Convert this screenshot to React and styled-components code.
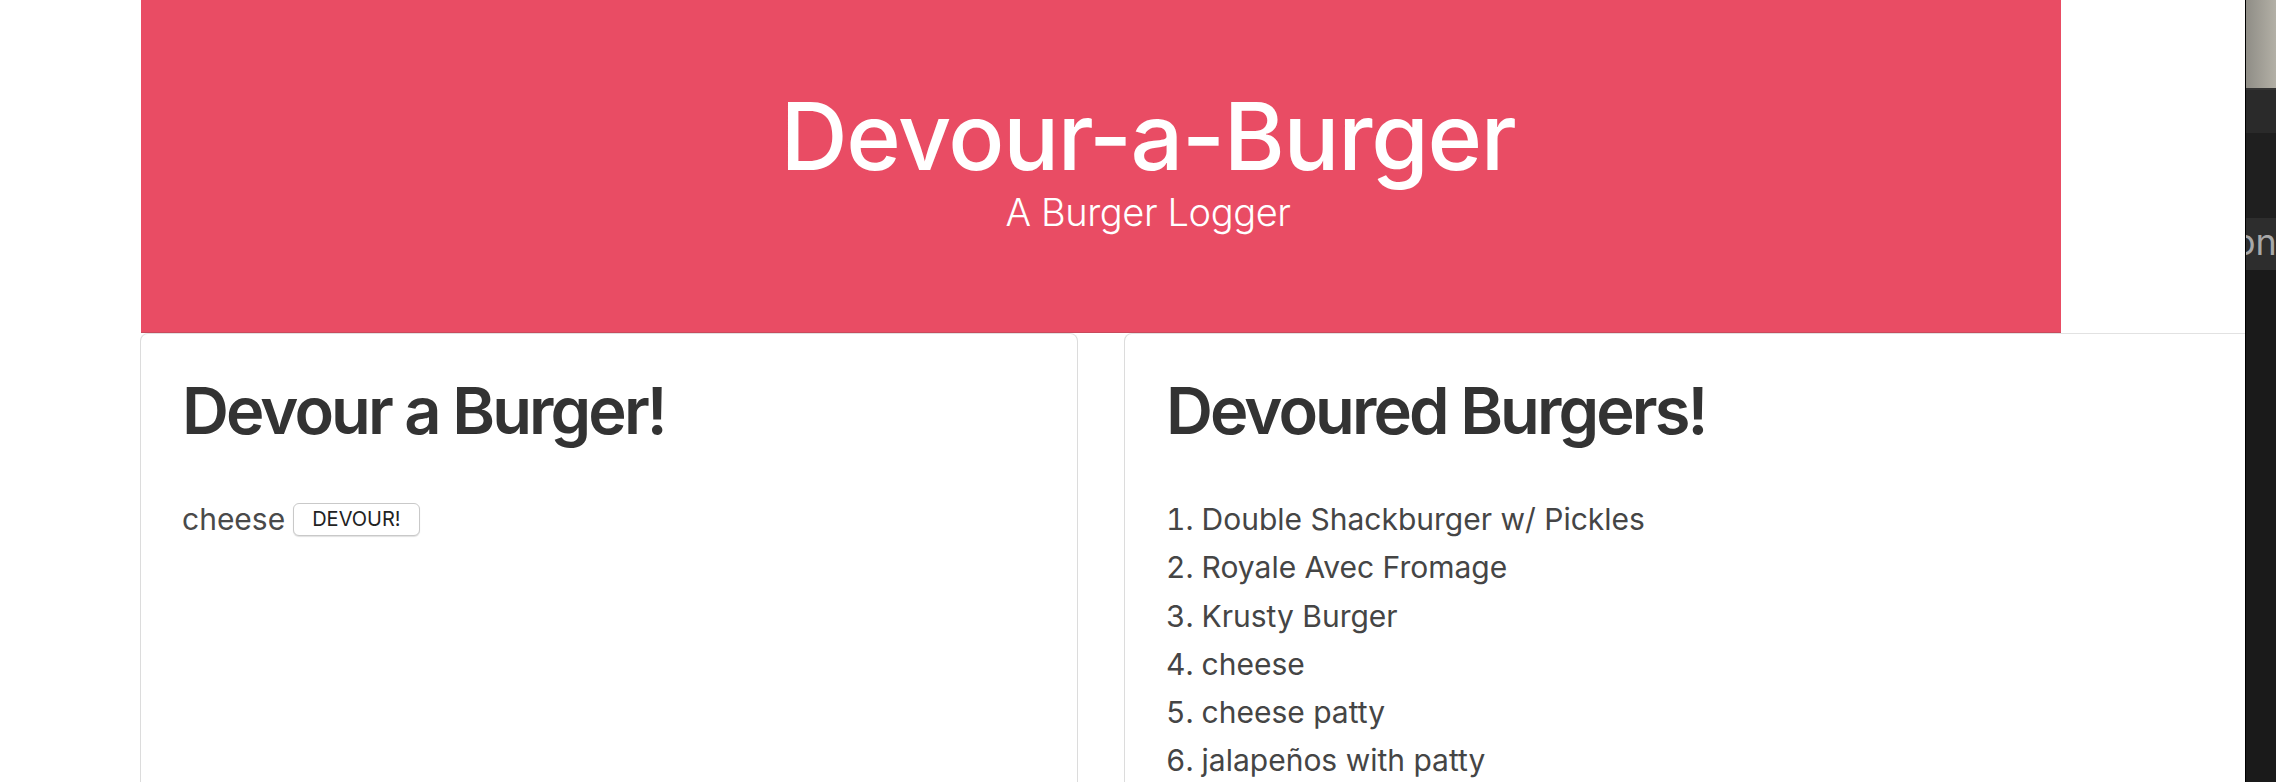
import React from 'react';
import styled, { createGlobalStyle } from 'styled-components';

const GlobalStyle = createGlobalStyle`
  html, body {
    margin: 0;
    padding: 0;
    background: #fff;
    font-family: Inter, "Noto Sans", sans-serif;
    overflow: hidden;
  }
`;

const Screen = styled.div`
  display: flex;
  width: 2276px;
  height: 782px;
  overflow: hidden;
`;

const Page = styled.div`
  flex: 1;
  min-width: 0;
  overflow: hidden;
`;

const Jumbotron = styled.header`
  box-sizing: border-box;
  width: 1920px;
  height: 333px;
  margin-left: 141px;
  padding: 90px 0 0 94px;
  background: #e94c64;
  border-bottom: 1px solid #c84a5c;
  color: #fff;
  text-align: center;
`;

const Title = styled.h1`
  margin: 0;
  font-size: 93px;
  line-height: 1;
  font-weight: 500;
  letter-spacing: -1.3px;
`;

const Subtitle = styled.p`
  margin: 7px 0 0;
  font-size: 38px;
  line-height: 1.2;
  font-weight: 300;
  letter-spacing: -0.4px;
`;

const Row = styled.div`
  display: flex;
  gap: 46px;
  margin-left: 140px;
`;

const Card = styled.section`
  box-sizing: border-box;
  flex: none;
  width: ${(p) => p.$width}px;
  min-height: 520px;
  padding: 38px 41px 0;
  border: 1px solid #dcdcdc;
  border-top-color: #e2e2e2;
  border-radius: 8px;
  color: #333;
`;

const CardTitle = styled.h2`
  margin: 0 0 45px;
  font-size: 65px;
  line-height: 1.2;
  font-weight: 600;
  letter-spacing: -2.9px;
  color: #333;
`;

const BurgerRow = styled.div`
  display: flex;
  align-items: center;
  gap: 8px;
  font-size: 30px;
  line-height: 48px;
  color: #4a4a4a;
`;

const DevourButton = styled.button`
  box-sizing: border-box;
  height: 33px;
  padding: 0 18px;
  border: 1px solid #c9c9c9;
  border-radius: 6px;
  background: #fff;
  box-shadow: 0 1px 1px rgba(0, 0, 0, 0.12);
  font-family: Inter, "Noto Sans", sans-serif;
  font-size: 20px;
  line-height: 1;
  color: #222;
  text-transform: uppercase;
`;

const BurgerList = styled.ol`
  margin: 0;
  padding: 0;
  list-style-position: inside;
  font-size: 30px;
  line-height: 48.3px;
  color: #454545;
`;

const SideStrip = styled.aside`
  flex: none;
  width: 30px;
  display: flex;
  flex-direction: column;
  border-left: 1px solid #000;
  background: #1a1a1a;
  overflow: hidden;
`;

const StripBand = styled.div`
  flex: none;
  height: ${(p) => p.$h}px;
  background: ${(p) => p.$bg};
  border-bottom: ${(p) => (p.$line ? '2px solid #333' : 'none')};
`;

const StripLabel = styled.div`
  flex: none;
  height: 52px;
  background: #2d2d2d;
  color: #a8a8a8;
  font-family: Inter, "Noto Sans", sans-serif;
  font-size: 36px;
  line-height: 48px;
  margin-left: -12px;
  white-space: nowrap;
`;

const devoured = [
  'Double Shackburger w/ Pickles',
  'Royale Avec Fromage',
  'Krusty Burger',
  'cheese',
  'cheese patty',
  'jalapeños with patty',
];

export default function App() {
  return (
    <>
      <GlobalStyle />
      <Screen>
        <Page>
          <Jumbotron>
            <Title>Devour-a-Burger</Title>
            <Subtitle>A Burger Logger</Subtitle>
          </Jumbotron>
          <Row>
            <Card $width={938}>
              <CardTitle>Devour a Burger!</CardTitle>
              <BurgerRow>
                cheese <DevourButton>Devour!</DevourButton>
              </BurgerRow>
            </Card>
            <Card $width={1200}>
              <CardTitle>Devoured Burgers!</CardTitle>
              <BurgerList>
                {devoured.map((b) => (
                  <li key={b}>{b}</li>
                ))}
              </BurgerList>
            </Card>
          </Row>
        </Page>
        <SideStrip>
          <StripBand $h={88} $bg="linear-gradient(90deg, #8f8d86, #b3b0a6)" $line />
          <StripBand $h={43} $bg="#2a2a2a" />
          <StripBand $h={85} $bg="#1f1f1f" />
          <StripLabel>on</StripLabel>
        </SideStrip>
      </Screen>
    </>
  );
}
